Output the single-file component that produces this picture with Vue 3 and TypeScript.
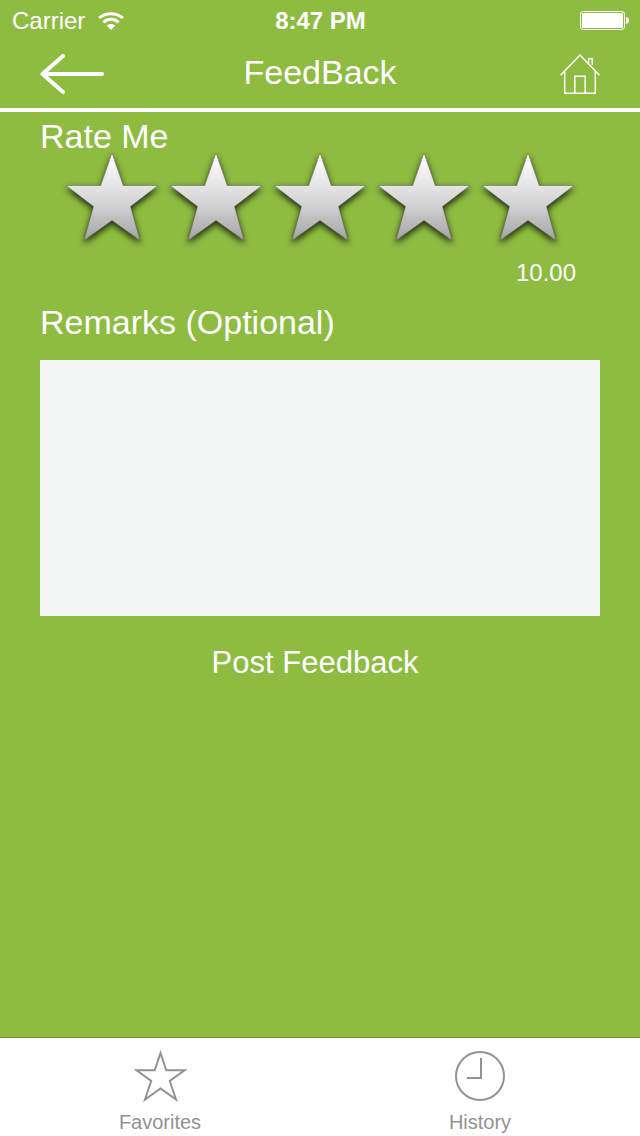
<script setup lang="ts">
import { ref } from 'vue'

const stars = [1, 2, 3, 4, 5]
const rating = ref<number>(5)
const remarks = ref<string>('')
</script>

<template>
  <div class="screen">
    <div class="status">
      <div class="carrier">
        <span>Carrier</span>
        <svg width="26" height="18" viewBox="0 0 26 18" fill="none" aria-hidden="true">
          <path d="M1.200 6C7.500 .2 18.500 .2 24.800 6" stroke="#fff" stroke-width="3" />
          <path d="M5.400 10.400C9.800 6.300 16.200 6.300 20.600 10.400" stroke="#fff" stroke-width="3" />
          <path d="M13 18 8.600 13.600C11 11.400 15 11.400 17.400 13.600Z" fill="#fff" />
        </svg>
      </div>
      <span class="time">8:47 PM</span>
      <div class="battery">
        <svg width="49" height="19" viewBox="0 0 49 19" aria-hidden="true">
          <rect x=".5" y=".5" width="44" height="18" rx="2.500" fill="none" stroke="#fff" />
          <rect x="2" y="2" width="41" height="15" rx="1" fill="#fff" />
          <path d="M46 6C50 6.500 50 12.500 46 13Z" fill="#fff" />
        </svg>
      </div>
    </div>

    <header class="bar">
      <button class="icon-button" type="button" aria-label="Back">
        <svg width="64" height="40" viewBox="0 0 64 40" fill="none" stroke="#fff" stroke-width="4" stroke-linecap="round" stroke-linejoin="round">
          <path d="M2.500 20H62M23 2 2.500 20 23 38" />
        </svg>
      </button>
      <h1>FeedBack</h1>
      <button class="icon-button end" type="button" aria-label="Home">
        <svg width="40" height="40" viewBox="0 0 40 40" fill="none" stroke="#fff" stroke-width="1.500">
          <path d="M.5 21.300 20 1 39.500 21.300M4.700 17.500V39.200H35.300V17.500M14.800 39V22.200H25.200V39M28.700 8.500V4.700H32.300V11" />
        </svg>
      </button>
    </header>

    <main>
      <form @submit.prevent>
        <fieldset>
          <legend>Rate Me</legend>
          <div class="stars">
            <label v-for="n in stars" :key="n" class="star">
              <input v-model="rating" type="radio" name="rating" :value="n" :aria-label="`${n} stars`" />
              <svg viewBox="0 0 104 104" aria-hidden="true">
                <defs>
                  <linearGradient :id="`silver${n}`" x1="0" y1="0" x2="0" y2="1">
                    <stop offset="0" stop-color="#ffffff" />
                    <stop offset=".38" stop-color="#e4e4e4" />
                    <stop offset=".65" stop-color="#cccccc" />
                    <stop offset="1" stop-color="#a3a3a3" />
                  </linearGradient>
                </defs>
                <path
                  d="M52 5 63.300 37.500H98L70.500 58.500 80 92.500 52 72.500 24 92.500 33.500 58.500 6 37.500H40.700Z"
                  :fill="`url(#silver${n})`"
                  stroke="#666"
                  stroke-opacity=".6"
                  stroke-width=".9"
                />
              </svg>
            </label>
          </div>
          <output>{{ (rating * 2).toFixed(2) }}</output>
        </fieldset>
        <label class="remarks-label" for="remarks">Remarks (Optional)</label>
        <textarea id="remarks" v-model="remarks"></textarea>
        <button class="post" type="submit">Post Feedback</button>
      </form>
    </main>

    <nav>
      <a href="#favorites">
        <svg width="54" height="52" viewBox="0 0 54 52" fill="none" stroke="#929292" stroke-width="2">
          <path d="M27.500 3 33.200 20.300H51.500L36.800 31 43 49.500 27.500 38.400 12 49.500 18.200 31 3.500 20.300H21.800Z" />
        </svg>
        <span>Favorites</span>
      </a>
      <a href="#history">
        <svg width="54" height="52" viewBox="0 0 54 52" fill="none" stroke="#929292" stroke-width="2">
          <circle cx="27" cy="26" r="24" />
          <path d="M28 8V28H14" />
        </svg>
        <span>History</span>
      </a>
    </nav>
  </div>
</template>

<style>
body {
  margin: 0;
}
</style>

<style scoped>
.screen {
  display: flex;
  flex-direction: column;
  min-height: 100vh;
  background: #8dbc40;
  color: #fff;
  font-family: "Liberation Sans", Arial, sans-serif;
}

button {
  padding: 0;
  border: 0;
  background: none;
  color: inherit;
  font-family: inherit;
  cursor: pointer;
}

svg {
  display: block;
}

.status {
  display: grid;
  grid-template-columns: 1fr auto 1fr;
  align-items: center;
  box-sizing: border-box;
  height: 40px;
  padding: 1px 11px 0 12px;
  font-size: 24px;
}

.carrier {
  display: flex;
  align-items: center;
  gap: 13px;
}

.time {
  font-weight: bold;
}

.battery {
  justify-self: end;
}

.bar {
  display: grid;
  grid-template-columns: 1fr auto 1fr;
  align-items: center;
  height: 68px;
  padding: 0 40px;
  border-bottom: 4px solid #fff;
}

.icon-button {
  justify-self: start;
}

.end {
  justify-self: end;
}

h1 {
  margin: 0;
  padding-bottom: 4px;
  font-size: 34px;
  font-weight: normal;
  line-height: 40px;
}

main {
  flex: 1;
  padding: 4px 40px 0;
}

form {
  display: flex;
  flex-direction: column;
}

fieldset {
  display: flex;
  flex-direction: column;
  min-width: 0;
  margin: 0;
  padding: 0 20px;
  border: 0;
}

legend {
  margin-left: -20px;
  padding: 0;
  font-size: 34px;
  line-height: 40px;
}

.stars {
  display: flex;
  margin-top: -8px;
}

.star {
  position: relative;
  flex: 1;
}

.star input {
  position: absolute;
  inset: 0;
  width: 100%;
  height: 100%;
  margin: 0;
  opacity: 0;
  cursor: pointer;
}

.star svg {
  width: 100%;
  filter: drop-shadow(0 3px 3px rgba(0, 0, 0, 0.8));
}

output {
  align-self: flex-end;
  margin-top: 7px;
  padding-right: 4px;
  font-size: 24px;
  line-height: 28px;
}

.remarks-label {
  margin-top: 15px;
  font-size: 34px;
  line-height: 40px;
}

textarea {
  box-sizing: border-box;
  width: 100%;
  height: 256px;
  margin: 18px 0 0;
  padding: 12px;
  border: 0;
  border-radius: 0;
  background: #f4f6f6;
  color: #333;
  font: 28px "Liberation Sans", Arial, sans-serif;
  resize: none;
}

.post {
  align-self: center;
  margin-top: 27px;
  padding-right: 10px;
  font-size: 31px;
  line-height: 40px;
}

nav {
  display: flex;
  height: 98px;
  border-top: 1px solid #6f9333;
  background: #fff;
}

nav a {
  display: flex;
  flex: 1;
  flex-direction: column;
  align-items: center;
  gap: 8px;
  padding-top: 12px;
  color: #929292;
  font-size: 20px;
  line-height: 24px;
  text-decoration: none;
}
</style>
